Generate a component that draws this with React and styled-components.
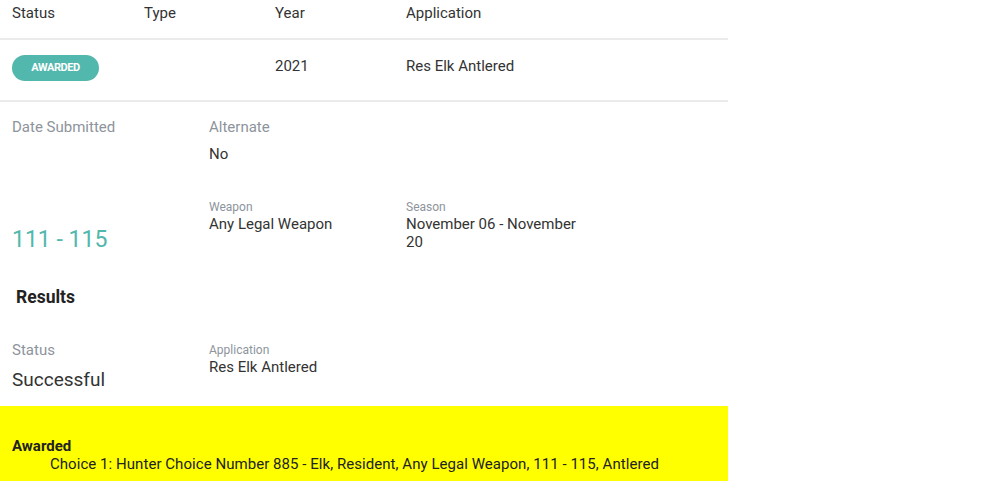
import React from 'react'
import styled, { createGlobalStyle } from 'styled-components'

const GlobalStyle = createGlobalStyle`
  body {
    margin: 0;
    background: #ffffff;
    font-family: Roboto, "Liberation Sans", sans-serif;
    color: #333333;
  }
`

const Page = styled.div`
  width: 728px;
`

const TableRow = styled.div`
  display: grid;
  grid-template-columns: 132px 131px 131px 1fr;
  align-items: start;
  box-sizing: border-box;
  height: ${props => props.height}px;
  padding: ${props => props.top}px 0 0 12px;
  border-bottom: 2px solid #ebebeb;
  font-size: 15px;
  line-height: 18px;
  color: #333333;
`

const Badge = styled.span`
  display: inline-flex;
  align-items: center;
  justify-content: center;
  width: 87px;
  height: 26px;
  margin-top: -2px;
  border-radius: 13px;
  background: #52b7ad;
  color: #ffffff;
  font-size: 11px;
  font-weight: 700;
  letter-spacing: -0.4px;
`

const Details = styled.div`
  display: grid;
  grid-template-columns: 197px 197px 1fr;
  padding: 15px 0 0 12px;
`

const Field = styled.div`
  display: flex;
  flex-direction: column;
  padding-top: ${props => props.top || 0}px;
`

const Label = styled.div`
  font-size: ${props => (props.small ? 12 : 15)}px;
  line-height: ${props => (props.small ? 15 : 20)}px;
  color: #8d949c;
`

const Value = styled.div`
  font-size: ${props => props.size || 15}px;
  line-height: ${props => props.lh || 18}px;
  color: ${props => props.color || '#333333'};
  margin-top: ${props => props.gap || 0}px;
`

const Heading = styled.div`
  font-size: 17.5px;
  font-weight: 700;
  color: #222222;
  padding: 34px 0 0 16px;
  line-height: 20px;
`

const Results = styled.div`
  display: grid;
  grid-template-columns: 197px 1fr;
  padding: 33px 0 0 12px;
`

const Awarded = styled.div`
  margin-top: 14px;
  background: #ffff00;
  height: 75px;
  padding: 31px 0 0 12px;
  box-sizing: border-box;
  font-size: 15px;
  line-height: 18px;
  color: #222222;
`

const AwardTitle = styled.div`
  font-weight: 700;
`

const AwardLine = styled.div`
  padding-left: 38px;
  letter-spacing: 0.05px;
`

export default function App() {
  return (
    <Page>
      <GlobalStyle />
      <TableRow height={40} top={4}>
        <span>Status</span>
        <span>Type</span>
        <span>Year</span>
        <span>Application</span>
      </TableRow>
      <TableRow height={62} top={17}>
        <Badge>AWARDED</Badge>
        <span />
        <span>2021</span>
        <span>Res Elk Antlered</span>
      </TableRow>

      <Details>
        <Field>
          <Label>Date Submitted</Label>
        </Field>
        <Field>
          <Label>Alternate</Label>
          <Value gap={8}>No</Value>
        </Field>
        <span />
        <Field top={64}>
          <Value size={23} lh={26} color="#52b7ad">111 - 115</Value>
        </Field>
        <Field top={37}>
          <Label small>Weapon</Label>
          <Value>Any Legal Weapon</Value>
        </Field>
        <Field top={37}>
          <Label small>Season</Label>
          <Value>November 06 - November<br />20</Value>
        </Field>
      </Details>

      <Heading>Results</Heading>

      <Results>
        <Field>
          <Label>Status</Label>
          <Value size={19} lh={24} gap={8}>Successful</Value>
        </Field>
        <Field top={3}>
          <Label small>Application</Label>
          <Value>Res Elk Antlered</Value>
        </Field>
      </Results>

      <Awarded>
        <AwardTitle>Awarded</AwardTitle>
        <AwardLine>Choice 1: Hunter Choice Number 885 - Elk, Resident, Any Legal Weapon, 111 - 115, Antlered</AwardLine>
      </Awarded>
    </Page>
  )
}
